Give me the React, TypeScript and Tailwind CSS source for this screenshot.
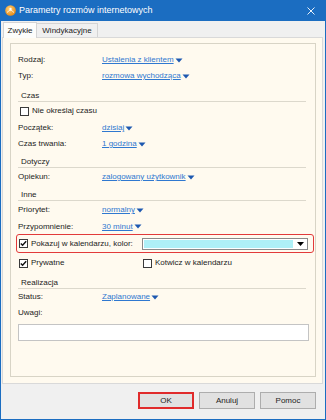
import React from "react";

const Link = ({ children }: { children: string }) => (
  <span className="inline-flex items-center text-[#2f78d0] underline underline-offset-[1px]">
    {children}
    <svg width="8" height="5" viewBox="0 0 8 5" className="ml-[1px]">
      <path d="M0.5 0.5h7L4 4.5z" fill="#1d58b0" />
    </svg>
  </span>
);

const Check = ({ checked }: { checked?: boolean }) => (
  <span className="w-[9px] h-[9px] shrink-0 border border-[#3a3a3a] bg-white flex items-center justify-center">
    {checked && (
      <svg width="7" height="7" viewBox="0 0 7 7">
        <path d="M0.8 3.4l1.8 1.9L6.2 1.2" stroke="#111" strokeWidth="1.4" fill="none" />
      </svg>
    )}
  </span>
);

const Row = ({ label, value, h }: { label: string; value: string; h: string }) => (
  <div className={`flex items-center ${h}`}>
    <span className="w-[84px] shrink-0">{label}</span>
    <Link>{value}</Link>
  </div>
);

const Section = ({ title, mt }: { title: string; mt: string }) => (
  <div className={`${mt} h-[12px] mr-[2px] pl-[3px] flex items-center border-b border-[#dcd8cc]`}>
    {title}
  </div>
);

const Btn = ({ label, focus }: { label: string; focus?: boolean }) => (
  <div
    className={`w-[56px] h-[17px] flex items-center justify-center bg-[#e1e1e1] ${
      focus ? "border-2 border-[#e02b2b]" : "border border-[#adadad]"
    }`}
  >
    {label}
  </div>
);

export default function App() {
  return (
    <div className="w-[326px] h-[420px] flex flex-col bg-[#1b6dc1] font-['Liberation_Sans',Arial,sans-serif] text-[8px] text-[#1c1c1c]">
      {/* title bar */}
      <div className="h-[21px] shrink-0 flex items-center pl-[5px] pr-[11px] text-white text-[9px]">
        <svg width="11" height="11" viewBox="0 0 11 11">
          <defs>
            <radialGradient id="g" cx="0.4" cy="0.35" r="0.7">
              <stop offset="0" stopColor="#ffd27a" />
              <stop offset="1" stopColor="#e8870f" />
            </radialGradient>
          </defs>
          <circle cx="5.5" cy="5.5" r="5.3" fill="url(#g)" />
          <path d="M2.5 7.5c.8-1.6 1.6-2.2 3-2.2s2.2.6 3 2.2" stroke="#fff" strokeWidth="1" fill="none" />
          <circle cx="5.5" cy="4" r="1.2" fill="#fff" />
        </svg>
        <span className="ml-[3px] flex-1">Parametry rozmów internetowych</span>
        <svg width="8" height="8" viewBox="0 0 8 8">
          <path d="M0.5 0.5l7 7M7.5 0.5l-7 7" stroke="#fff" strokeWidth="0.9" />
        </svg>
      </div>

      <div className="flex-1 flex flex-col mx-px mb-px bg-[#f0f0f0]">
        {/* tabs */}
        <div className="h-[16px] shrink-0 flex items-end pl-[2px]">
          <div className="relative z-10 -mb-px h-[16px] w-[34px] flex items-center justify-center bg-[#fdfdfb] border border-b-0 border-[#d4d4d4]">
            Zwykłe
          </div>
          <div className="h-[14px] w-[61px] flex items-center justify-center bg-[#f0f0f0] border border-l-0 border-b-0 border-[#d4d4d4]">
            Windykacyjne
          </div>
        </div>

        {/* panel */}
        <div className="h-[347px] shrink-0 ml-px mr-[2px] flex flex-col bg-[#fffaef] border border-[#d9d9d9] pt-[5px] pl-[7px] pr-[6px] pb-[6px]">
          <div className="flex-1 flex flex-col border border-[#d8d4c6] px-[7px] pt-[8px]">
            <Row label="Rodzaj:" value="Ustalenia z klientem" h="h-[16px]" />
            <Row label="Typ:" value="rozmowa wychodząca" h="h-[16px]" />

            <Section title="Czas" mt="mt-[6px]" />
            <div className="h-[18px] flex items-center ml-[2px]">
              <Check />
              <span className="ml-[3px]">Nie określaj czasu</span>
            </div>
            <Row label="Początek:" value="dzisiaj" h="h-[16px]" />
            <Row label="Czas trwania:" value="1 godzina" h="h-[16px]" />

            <Section title="Dotyczy" mt="mt-[4px]" />
            <Row label="Opiekun:" value="zalogowany użytkownik" h="h-[18px]" />

            <Section title="Inne" mt="mt-[3px]" />
            <Row label="Priorytet:" value="normalny" h="h-[18px]" />
            <Row label="Przypomnienie:" value="30 minut" h="h-[15px]" />

            <div className="h-[19px] -ml-[2px] -mr-[6px] flex items-center pl-[2px] pr-[5px] border border-[#e23a3a] rounded-[3px]">
              <Check checked />
              <span className="ml-[3px] flex-1">Pokazuj w kalendarzu, kolor:</span>
              <div className="w-[166px] h-[12px] flex border border-[#8a8a8a] bg-white">
                <div className="flex-1 m-px bg-[#aef0f7]" />
                <div className="w-[13px] flex items-center justify-center">
                  <svg width="7" height="4" viewBox="0 0 7 4">
                    <path d="M0 0h7L3.5 4z" fill="#000" />
                  </svg>
                </div>
              </div>
            </div>

            <div className="h-[20px] flex items-center ml-px">
              <div className="w-[124px] flex items-center">
                <Check checked />
                <span className="ml-[3px]">Prywatne</span>
              </div>
              <Check />
              <span className="ml-[3px]">Kotwicz w kalendarzu</span>
            </div>

            <Section title="Realizacja" mt="mt-[4px]" />
            <Row label="Status:" value="Zaplanowane" h="h-[16px]" />
            <div className="h-[16px] flex items-center">Uwagi:</div>
            <div className="mt-[3px] h-[17px] mr-[-1px] bg-white border border-[#c4c4c4]" />
          </div>
        </div>

        {/* footer */}
        <div className="flex-1 flex justify-end items-start gap-[5px] pt-[8px] pr-[9px]">
          <Btn label="OK" focus />
          <Btn label="Anuluj" />
          <Btn label="Pomoc" />
        </div>
      </div>
    </div>
  );
}
